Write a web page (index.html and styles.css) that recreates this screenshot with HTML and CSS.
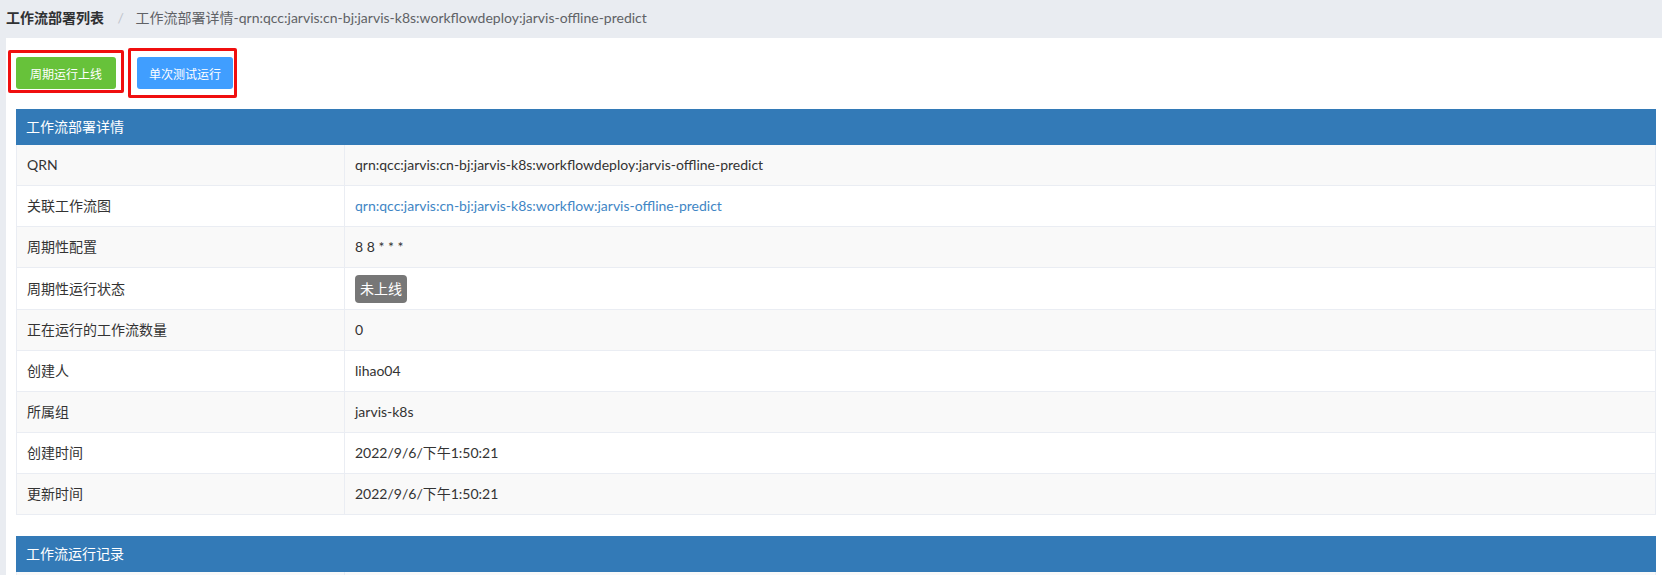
FILE: index.html
```html
<!DOCTYPE html>
<html lang="zh-CN">
<head>
<meta charset="utf-8">
<title>工作流部署详情</title>
<link rel="stylesheet" href="styles.css">
</head>
<body>
<div class="breadcrumb">
  <span class="crumb-strong">工作流部署列表</span>
  <span class="crumb-sep">/</span>
  <span class="crumb-current">工作流部署详情-qrn:qcc:jarvis:cn-bj:jarvis-k8s:workflowdeploy:jarvis-offline-predict</span>
</div>
<div class="main">
  <div class="actions">
    <button class="btn btn-success mark-a">周期运行上线</button>
    <button class="btn btn-primary mark-b">单次测试运行</button>
  </div>

  <div class="panel">
    <div class="panel-heading">工作流部署详情</div>
    <table class="detail">
      <tr><td class="label">QRN</td><td>qrn:qcc:jarvis:cn-bj:jarvis-k8s:workflowdeploy:jarvis-offline-predict</td></tr>
      <tr><td class="label">关联工作流图</td><td><a class="link" href="#">qrn:qcc:jarvis:cn-bj:jarvis-k8s:workflow:jarvis-offline-predict</a></td></tr>
      <tr><td class="label">周期性配置</td><td>8 8 * * *</td></tr>
      <tr><td class="label">周期性运行状态</td><td><span class="badge">未上线</span></td></tr>
      <tr><td class="label">正在运行的工作流数量</td><td>0</td></tr>
      <tr><td class="label">创建人</td><td>lihao04</td></tr>
      <tr><td class="label">所属组</td><td>jarvis-k8s</td></tr>
      <tr><td class="label">创建时间</td><td>2022/9/6/下午1:50:21</td></tr>
      <tr><td class="label">更新时间</td><td>2022/9/6/下午1:50:21</td></tr>
    </table>
  </div>

  <div class="panel panel-second">
    <div class="panel-heading">工作流运行记录</div>
    <table class="detail">
      <tr><td class="label">&nbsp;</td><td>&nbsp;</td></tr>
    </table>
  </div>
</div>
</body>
</html>
```

FILE: styles.css
```css
html, body {
  margin: 0;
  padding: 0;
}
body {
  background: #e9ecf1;
  font-family: "Lato", "Noto Sans CJK SC", sans-serif;
  font-size: 14px;
  color: #333;
  overflow: hidden;
}
.breadcrumb {
  height: 38px;
  line-height: 36px;
  padding-left: 6px;
  font-size: 14px;
  white-space: nowrap;
}
.crumb-strong {
  font-weight: bold;
  color: #303133;
}
.crumb-sep {
  color: #c0c4cc;
  margin: 0 8px 0 10px;
}
.crumb-current {
  color: #606266;
}
.main {
  margin-left: 6px;
  background: #fff;
  padding: 19px 6px 20px 10px;
  min-height: 600px;
}
.actions {
  display: flex;
  gap: 21px;
  height: 32px;
  margin-bottom: 20px;
}
.btn {
  position: relative;
  box-sizing: border-box;
  height: 32px;
  padding: 0;
  border: none;
  border-radius: 3px;
  color: #fff;
  font-family: "Lato", "Noto Sans CJK SC", sans-serif;
  font-size: 12px;
  white-space: nowrap;
  text-align: center;
}
.btn-success {
  background: #67c23a;
  width: 100px;
}
.btn-primary {
  background: #409eff;
  width: 96px;
}
.btn::after {
  content: "";
  position: absolute;
  border: 3px solid #f00f0f;
  border-radius: 2px;
}
.mark-a::after {
  left: -8px;
  top: -7px;
  right: -8px;
  bottom: -4px;
}
.mark-b::after {
  left: -9px;
  top: -9px;
  right: -4px;
  bottom: -9px;
}
.panel-heading {
  background: #337ab7;
  color: #fff;
  height: 36px;
  line-height: 36px;
  padding-left: 10px;
  font-size: 14px;
}
.panel-second {
  margin-top: 21px;
}
.detail {
  width: 100%;
  border-collapse: collapse;
  border: 1px solid #eaedf3;
  border-top: none;
}
.detail td {
  border: 1px solid #eaedf3;
  padding: 10px 10px;
  line-height: 20px;
  height: 20px;
  vertical-align: middle;
  white-space: nowrap;
}
.detail tr:first-child td {
  border-top: none;
}
.detail tr:nth-child(odd) td {
  background: #f9f9f9;
}
.detail td.label {
  width: 307px;
}
.link {
  color: #3f86c5;
  text-decoration: none;
}
.badge {
  display: inline-block;
  background: #777;
  color: #fff;
  border-radius: 4px;
  padding: 4px 5px;
  margin: -4px 0;
  line-height: 20px;
  vertical-align: middle;
}
```
